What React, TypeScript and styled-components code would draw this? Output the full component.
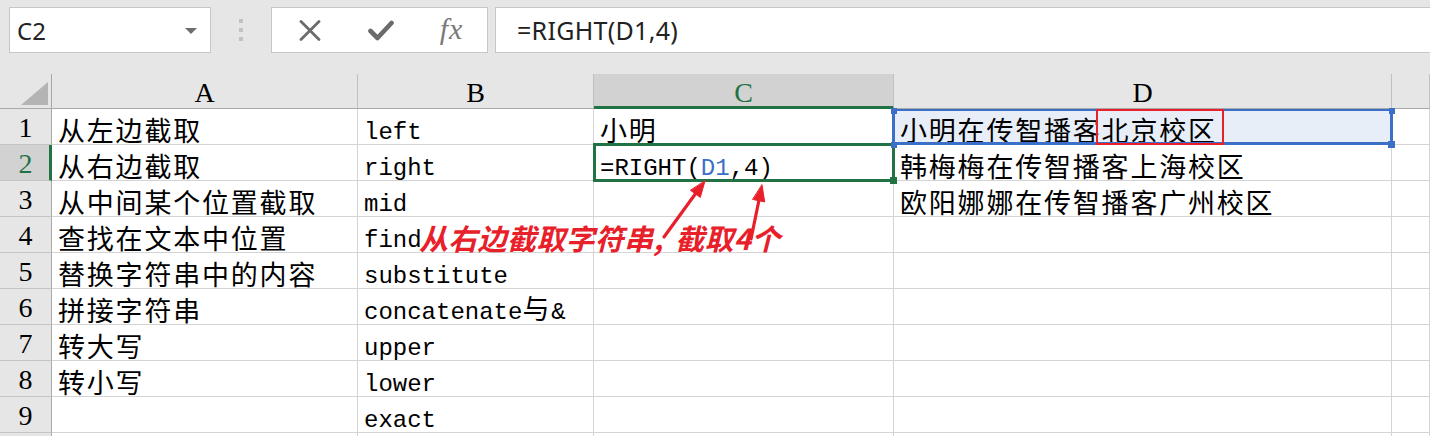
import React from 'react';
import styled, { createGlobalStyle, css } from 'styled-components';

const GREEN = '#217346';
const BLUE = '#3b6fc8';
const RED = '#e8202a';

const Global = createGlobalStyle`
  html, body { margin: 0; padding: 0; background: #ffffff; }
  body { width: 1430px; height: 436px; overflow: hidden; }
  * { box-sizing: border-box; }
`;

const Page = styled.div`
  position: relative;
  width: 1430px;
  height: 436px;
  overflow: hidden;
  background: #e6e6e6;
`;

/* ---------- formula toolbar ---------- */
const Toolbar = styled.div`
  display: flex;
  align-items: stretch;
  height: 74px;
  padding: 7px 0 21px 9px;
`;

const BarBox = styled.div`
  display: flex;
  align-items: center;
  background: #ffffff;
  border: 1px solid #c6c6c6;
  font-family: 'Noto Sans', 'Open Sans', sans-serif;
  font-size: 24px;
  color: #222;
`;

const NameBox = styled(BarBox)`
  width: 202px;
  justify-content: space-between;
  padding: 0 13px 0 7px;
`;

const Caret = styled.span`
  width: 0;
  height: 0;
  border-left: 6px solid transparent;
  border-right: 6px solid transparent;
  border-top: 6px solid #6e6e6e;
  margin-top: 2px;
`;

const Grip = styled.div`
  width: 60px;
  display: flex;
  flex-direction: column;
  align-items: center;
  justify-content: center;
  gap: 5px;
  padding-right: 1px;
`;

const GripDot = styled.span`
  width: 4px;
  height: 4px;
  background: #c2c2c2;
`;

const ActionBox = styled(BarBox)`
  width: 217px;
  padding-left: 2px;
`;

const ActionSlot = styled.div`
  width: 72px;
  display: flex;
  justify-content: center;
  align-items: center;
  color: #6b6b6b;
`;

const FxLabel = styled.span`
  font-family: 'Liberation Serif', serif;
  font-style: italic;
  font-size: 30px;
  color: #7a7a7a;
  letter-spacing: 1px;
  margin-top: -3px;
`;

const FormulaBox = styled(BarBox)`
  flex: 1;
  margin-left: 7px;
  border-right: none;
  padding-left: 21px;
  font-size: 25px;
  letter-spacing: 0.3px;
`;

/* ---------- sheet grid ---------- */
const Sheet = styled.div`
  display: grid;
  grid-template-columns: 52px 306px 236px 300px 498px 1fr;
  grid-template-rows: 35px repeat(10, 36px);
  background: #ffffff;
`;

const Corner = styled.div`
  position: relative;
  background: #e6e6e6;
  border-right: 1px solid #a9a9a9;
  border-bottom: 1px solid #a9a9a9;
  &::after {
    content: '';
    position: absolute;
    right: 3px;
    bottom: 3px;
    width: 0;
    height: 0;
    border-left: 27px solid transparent;
    border-bottom: 23px solid #b4b4b4;
  }
`;

const ColHead = styled.div<{ $active?: boolean }>`
  background: ${(p) => (p.$active ? '#d2d2d2' : '#e6e6e6')};
  border-right: 1px solid #c0c0c0;
  border-bottom: ${(p) => (p.$active ? `3px solid ${GREEN}` : '1px solid #a9a9a9')};
  color: ${(p) => (p.$active ? GREEN : '#000')};
  font-family: 'Liberation Serif', serif;
  font-size: 28px;
  line-height: 32px;
  padding-top: 3px;
  text-align: center;
`;

const RowHead = styled.div<{ $active?: boolean }>`
  background: ${(p) => (p.$active ? '#d2d2d2' : '#e6e6e6')};
  border-right: ${(p) => (p.$active ? `3px solid ${GREEN}` : '1px solid #a9a9a9')};
  border-bottom: 1px solid #c4c4c4;
  color: ${(p) => (p.$active ? GREEN : '#000')};
  font-family: 'Liberation Serif', serif;
  font-size: 28px;
  line-height: 32px;
  padding-top: 3px;
  padding-left: ${(p) => (p.$active ? '2px' : '0')};
  text-align: center;
`;

const hanFont = css`
  font-family: 'Noto Sans CJK SC', 'Noto Sans', sans-serif;
  font-size: 27px;
  letter-spacing: 1.8px;
`;

type Outline = 'green' | 'blue';

const Cell = styled.div<{ $kind?: 'han' | 'mono'; $outline?: Outline; $fill?: string }>`
  position: relative;
  border-right: 1px solid #d4d4d4;
  border-bottom: 1px solid #d4d4d4;
  background: ${(p) => p.$fill || '#ffffff'};
  color: #000;
  white-space: nowrap;
  padding-left: 6px;
  line-height: 26px;
  ${(p) =>
    p.$kind === 'mono'
      ? css`
          font-family: 'Liberation Mono', 'Noto Sans CJK SC', monospace;
          font-size: 24px;
          padding-top: 11px;
        `
      : css`
          ${hanFont};
          padding-top: 8px;
        `}
  ${(p) =>
    p.$outline === 'green' &&
    css`
      z-index: 2;
      &::after {
        content: '';
        position: absolute;
        top: -2px;
        left: -1px;
        right: -2px;
        bottom: -2px;
        border: 3px solid ${GREEN};
        pointer-events: none;
      }
    `}
  ${(p) =>
    p.$outline === 'blue' &&
    css`
      z-index: 3;
      &::after {
        content: '';
        position: absolute;
        top: 0px;
        left: -2px;
        right: -2px;
        bottom: -1px;
        border: 3px solid ${BLUE};
        border-top-width: 2px;
        pointer-events: none;
      }
    `}
`;

const Han = styled.span`
  ${hanFont};
  line-height: 0;
`;

const RefText = styled.span`
  color: ${BLUE};
`;

const Handle = styled.span<{ $v: 'top' | 'bottom'; $h: 'left' | 'right'; $color: string; $size?: number }>`
  position: absolute;
  z-index: 4;
  width: ${(p) => p.$size || 6}px;
  height: ${(p) => p.$size || 6}px;
  background: ${(p) => p.$color};
  ${(p) => (p.$v === 'top' ? 'top: -1px;' : 'bottom: -4px;')}
  ${(p) => (p.$h === 'left' ? 'left: -3px;' : 'right: -4px;')}
`;

/* ---------- annotations ---------- */
const Note = styled.div`
  position: absolute;
  left: 419px;
  top: 223px;
  z-index: 6;
  font-family: 'Noto Sans CJK SC', 'Noto Sans', sans-serif;
  font-weight: 700;
  font-style: italic;
  font-size: 29px;
  line-height: 29px;
  letter-spacing: 0.3px;
  color: ${RED};
  white-space: nowrap;
`;

const NoteGap = styled.span`
  display: inline-block;
  width: 12px;
`;

const Mark = styled.div`
  position: absolute;
  left: 1096px;
  top: 109px;
  width: 128px;
  height: 36px;
  border: 2px solid ${RED};
  z-index: 6;
  pointer-events: none;
`;

const ArrowLayer = styled.svg`
  position: absolute;
  left: 0;
  top: 0;
  z-index: 7;
  pointer-events: none;
`;

const colHeads = ['A', 'B', 'C', 'D', ''];

type Row = { a: string; b: React.ReactNode; c?: React.ReactNode; d?: string };

const rows: Row[] = [
  { a: '从左边截取', b: 'left', c: '小明', d: '小明在传智播客北京校区' },
  { a: '从右边截取', b: 'right', d: '韩梅梅在传智播客上海校区' },
  { a: '从中间某个位置截取', b: 'mid', d: '欧阳娜娜在传智播客广州校区' },
  { a: '查找在文本中位置', b: 'find' },
  { a: '替换字符串中的内容', b: 'substitute' },
  { a: '拼接字符串', b: <>concatenate<Han>与</Han>&amp;</> },
  { a: '转大写', b: 'upper' },
  { a: '转小写', b: 'lower' },
  { a: '', b: 'exact' },
  { a: '', b: '' },
];

export default function App() {
  return (
    <Page>
      <Global />
      <Toolbar>
        <NameBox>
          <span>C2</span>
          <Caret />
        </NameBox>
        <Grip>
          <GripDot />
          <GripDot />
          <GripDot />
        </Grip>
        <ActionBox>
          <ActionSlot>
            <svg width="22" height="21" viewBox="0 0 22 21">
              <path d="M2 1.5 L20 19.5 M20 1.5 L2 19.5" stroke="#6b6b6b" strokeWidth="2.8" strokeLinecap="round" />
            </svg>
          </ActionSlot>
          <ActionSlot>
            <svg width="26" height="21" viewBox="0 0 26 21">
              <path d="M2.5 11 L9.5 18 L23.5 3" stroke="#6b6b6b" strokeWidth="4.6" fill="none" strokeLinecap="round" strokeLinejoin="round" />
            </svg>
          </ActionSlot>
          <ActionSlot>
            <FxLabel>fx</FxLabel>
          </ActionSlot>
        </ActionBox>
        <FormulaBox>=RIGHT(D1,4)</FormulaBox>
      </Toolbar>

      <Sheet>
        <Corner />
        {colHeads.map((h, i) => (
          <ColHead key={i} $active={h === 'C'}>
            {h}
          </ColHead>
        ))}
        {rows.map((r, i) => {
          const n = i + 1;
          return (
            <React.Fragment key={n}>
              <RowHead $active={n === 2}>{n < 10 ? n : ''}</RowHead>
              <Cell $kind="han">{r.a}</Cell>
              <Cell $kind="mono">{r.b}</Cell>
              {n === 2 ? (
                <Cell $kind="mono" $outline="green">
                  =RIGHT(<RefText>D1</RefText>,4)
                  <Handle $v="bottom" $h="right" $color={GREEN} $size={7} />
                </Cell>
              ) : (
                <Cell $kind="han">{r.c}</Cell>
              )}
              {n === 1 ? (
                <Cell $kind="han" $outline="blue" $fill="#e8eef8">
                  {r.d}
                  <Handle $v="top" $h="left" $color={BLUE} />
                  <Handle $v="top" $h="right" $color={BLUE} />
                  <Handle $v="bottom" $h="left" $color={BLUE} />
                  <Handle $v="bottom" $h="right" $color={BLUE} $size={7} />
                </Cell>
              ) : (
                <Cell $kind="han">{r.d}</Cell>
              )}
              <Cell $kind="han" />
            </React.Fragment>
          );
        })}
      </Sheet>

      <Mark />
      <Note>
        从右边截取字符串,<NoteGap />截取4个
      </Note>
      <ArrowLayer width="1430" height="436" viewBox="0 0 1430 436">
        <g stroke={RED} strokeWidth="3.2" strokeLinecap="round" fill={RED}>
          <line x1="664" y1="237" x2="696" y2="193" />
          <polygon points="705,181 700.3,197.4 690.7,190.4" strokeWidth="1" />
          <line x1="751" y1="239" x2="759" y2="200" />
          <polygon points="762,185 764.7,201.9 752.9,199.5" strokeWidth="1" />
        </g>
      </ArrowLayer>
    </Page>
  );
}
